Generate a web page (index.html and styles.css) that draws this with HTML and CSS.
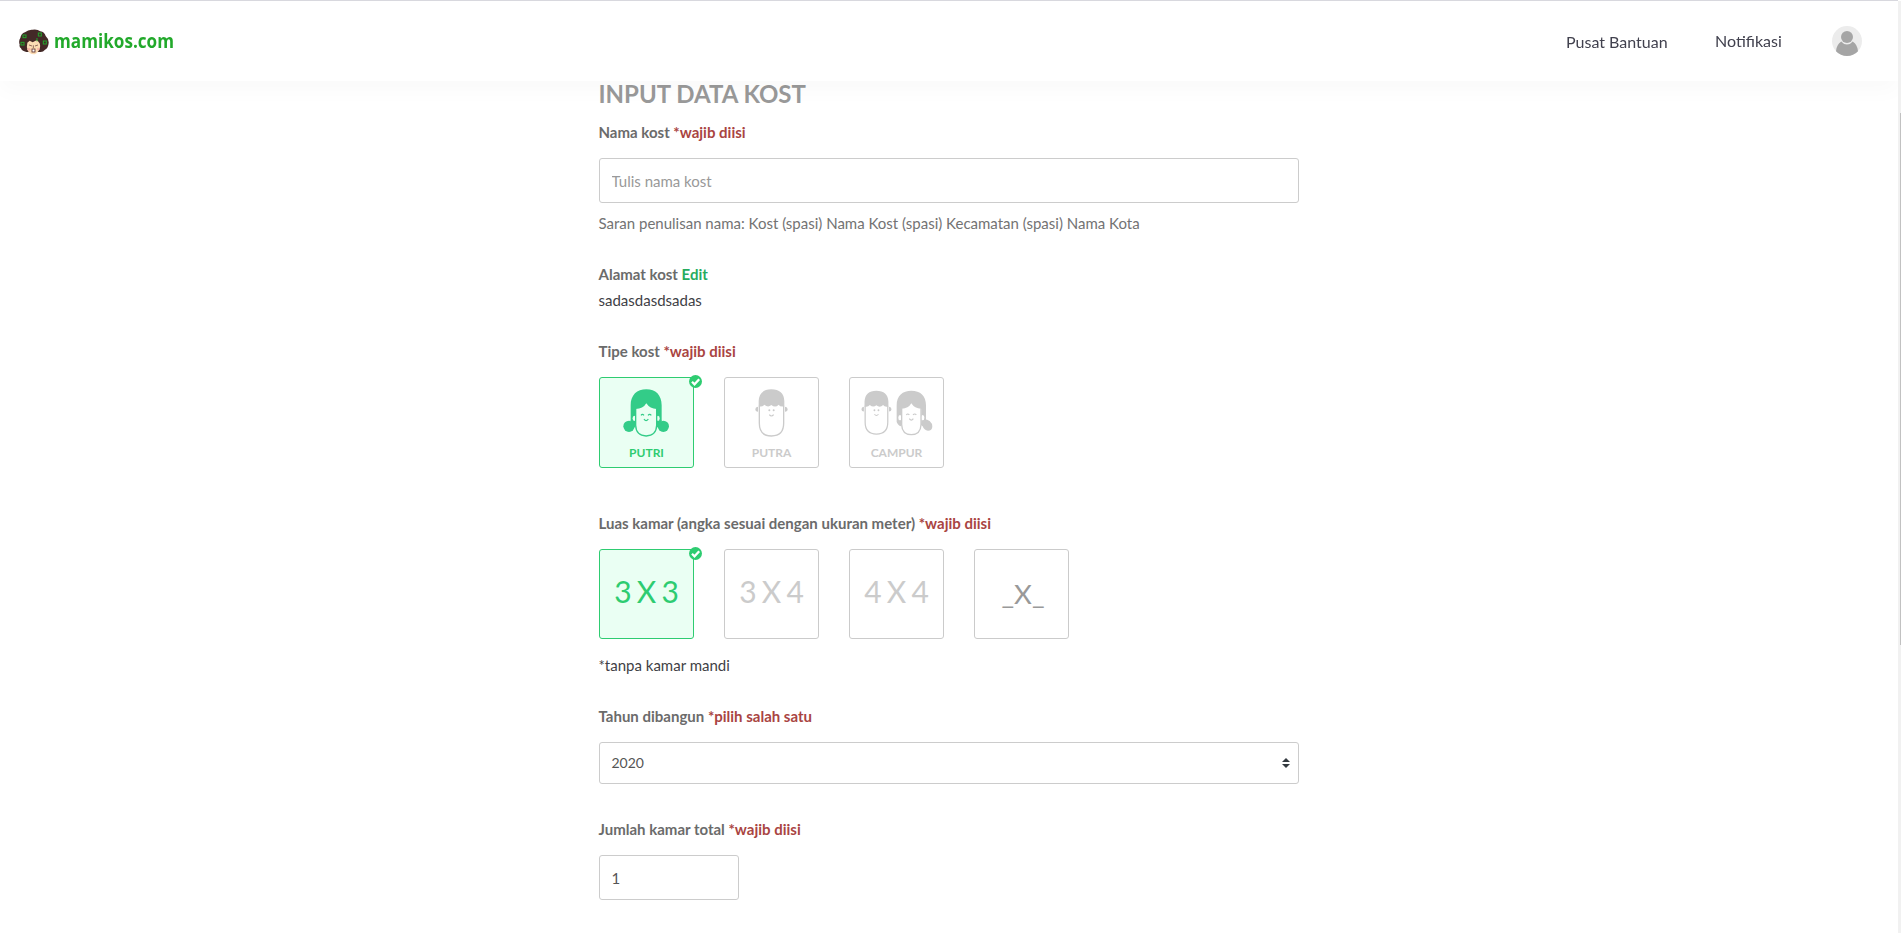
FILE: index.html
```html
<!DOCTYPE html>
<html lang="id">
<head>
<meta charset="utf-8">
<title>Mamikos - Input Data Kost</title>
<link rel="stylesheet" href="styles.css">
</head>
<body>
<header class="navbar">
  <a class="brand">
    <svg class="brand-face" viewBox="55 85 94 78" width="31.33" height="26">
      <path d="M60 132Q56 120 62 112Q64 99 76 95Q86 86 98 87Q112 84 122 92Q135 94 138 106Q148 115 147 127Q146 142 136 147Q130 155 121 154L80 154Q66 151 64 143Q58 139 60 132Z" fill="#432927"/>
      <path d="M83 126L90 120L99 125L112 118L120 128Q124 140 117 150Q110 161 101 161Q89 160 84 149Q80 138 83 126Z" fill="#fbdcb4"/>
      <ellipse cx="88" cy="146" rx="5" ry="4" fill="#f8b3a4"/><ellipse cx="116" cy="145" rx="4" ry="4" fill="#f8b3a4"/>
      <path d="M88 133l9 3M106 136l9-3M101 134v8" stroke="#6b4238" stroke-width="2.2" fill="none"/>
      <rect x="97" y="145" width="9" height="9" fill="#fff" stroke="#5a2d2a" stroke-width="2.5"/>
      <g fill="none" stroke="#22a52b" stroke-width="3"><rect x="70" y="103" width="9" height="8"/><rect x="116" y="97" width="9" height="9"/><rect x="64" y="125" width="9" height="8"/><rect x="131" y="121" width="9" height="9"/><path d="M112 112v10"/></g>
    </svg>
    <svg class="brand-name" width="130" height="34"><text x="0" y="23" textLength="120" lengthAdjust="spacingAndGlyphs">mamikos.com</text></svg>
  </a>
  <nav class="menu">
    <a class="menu-help">Pusat Bantuan</a>
    <a class="menu-notif">Notifikasi</a>
    <svg class="avatar" viewBox="0 0 30 30" width="30" height="30"><circle cx="15" cy="15" r="15" fill="#ececec"/><circle cx="15" cy="11" r="6" fill="#a5a5a5"/><path d="M9.3 15.5Q11.5 18.5 15 18.5Q18.500 18.500 20.700 15.500Q25.500 18.500 26 25.200Q21.500 30 15 30Q8.500 30 4 25.200Q4.500 18.500 9.300 15.500Z" fill="#a5a5a5"/></svg>
  </nav>
</header>
<main class="form">
  <h1 class="title">INPUT DATA KOST</h1>
  <section class="group group-name">
    <label class="label">Nama kost <span class="required">*wajib diisi</span></label>
    <input class="field" type="text" placeholder="Tulis nama kost">
    <p class="hint">Saran penulisan nama: Kost (spasi) Nama Kost (spasi) Kecamatan (spasi) Nama Kota</p>
  </section>
  <section class="group group-address">
    <label class="label">Alamat kost <a class="edit">Edit</a></label>
    <p class="text">sadasdasdsadas</p>
  </section>
  <section class="group group-type">
    <label class="label">Tipe kost <span class="required">*wajib diisi</span></label>
    <div class="cards">
      <div class="card card-type selected">
        <svg class="face" viewBox="100 70 140 145" width="46.67" height="48.33">
          <path d="M123 165V119C123 88 142 71 170 71C198 71 216 88 216 119V165H200V130H138V165Z" fill="#33cc88"/>
          <ellipse cx="118" cy="182" rx="17" ry="17" fill="#33cc88"/><ellipse cx="221" cy="182" rx="17" ry="17" fill="#33cc88"/>
          <path d="M123 163H137V185H125ZM202 163H216L214 185H202Z" fill="#33cc88"/>
          <ellipse cx="134" cy="158" rx="5" ry="8" fill="#eafff3"/><ellipse cx="205" cy="158" rx="5" ry="8" fill="#eafff3"/>
          <path d="M138 130Q160 130 170 113Q181 130 201 130V179Q200 210 169.500 211Q139 210 138 179Z" fill="#eafff3"/>
          <path d="M138 128V179Q139 210 169.500 211Q200 210 201 179V128" fill="none" stroke="#33cc88" stroke-width="4"/>
          <path d="M154 149q4-6 9 0M175 149q5-6 10 0M163 160q6 10 13 0" fill="none" stroke="#33cc88" stroke-width="3.5"/>
        </svg>
        <span class="caption">PUTRI</span>
        <svg class="check" viewBox="0 0 13 13" width="13" height="13"><circle cx="6.500" cy="6.500" r="6.500" fill="#2ecc71"/><path d="M3 6.800L5.500 9.300L10.200 4.300" fill="none" stroke="#fff" stroke-width="2.300"/></svg>
      </div>
      <div class="card card-type">
        <svg class="face" viewBox="474 70 140 145" width="46.67" height="48.33">
          <g id="boy-face">
            <path d="M508 120V173Q508 211 544.500 211Q581 211 581 173V120" fill="#fff" stroke="#cbcbcb" stroke-width="4"/>
            <path d="M506 122V106Q508 71 544 71Q581 71 583 106V122Q571 125 566 117Q556 128 544 118Q534 127 523 117Q517 125 506 122Z" fill="#cbcbcb"/>
            <path d="M504 123Q496 124 496 131Q496 138 504 138ZM585 123Q593 124 593 131Q593 138 585 138Z" fill="#cbcbcb"/>
            <circle cx="538" cy="134" r="3" fill="#cbcbcb"/><circle cx="551" cy="134" r="3" fill="#cbcbcb"/>
            <path d="M538 147q6 8 13 0" fill="none" stroke="#cbcbcb" stroke-width="3.500"/>
          </g>
        </svg>
        <span class="caption">PUTRA</span>
      </div>
      <div class="card card-type">
        <svg class="face" viewBox="809 70 220 145" width="73.33" height="48.33">
          <use href="#boy-face" transform="translate(352 9) scale(.93)"/>
          <path d="M919 175V119C919 90 937 75 963 75C990 75 1007 90 1007 119V163H993V130H933V182Q924 181 919 169Z" fill="#cbcbcb"/>
          <path d="M993 163Q1006 158 1018 166Q1027 174 1026 183Q1025 195 1013 195Q1001 194 997 182L992 178Z" fill="#cbcbcb"/>
          <ellipse cx="929" cy="156" rx="5" ry="8" fill="#fff"/><ellipse cx="997" cy="156" rx="5" ry="8" fill="#fff"/>
          <path d="M934 129Q954 129 963 113Q973 129 992 129V177Q991 206 963 207Q935 206 934 177Z" fill="#fff"/>
          <path d="M934 128V177Q935 206 963 207Q991 206 992 177V128" fill="none" stroke="#cbcbcb" stroke-width="4"/>
          <path d="M948 148q4-6 9 0M968 148q5-6 10 0M957 159q6 9 12 0" fill="none" stroke="#cbcbcb" stroke-width="3.500"/>
        </svg>
        <span class="caption">CAMPUR</span>
      </div>
    </div>
  </section>
  <section class="group group-size">
    <label class="label">Luas kamar (angka sesuai dengan ukuran meter) <span class="required">*wajib diisi</span></label>
    <div class="cards">
      <div class="card card-size selected">3 X 3
        <svg class="check" viewBox="0 0 13 13" width="13" height="13"><circle cx="6.500" cy="6.500" r="6.500" fill="#2ecc71"/><path d="M3 6.800L5.500 9.300L10.200 4.300" fill="none" stroke="#fff" stroke-width="2.300"/></svg>
      </div>
      <div class="card card-size">3 X 4</div>
      <div class="card card-size">4 X 4</div>
      <div class="card card-size custom">_X_</div>
    </div>
    <p class="text note">*tanpa kamar mandi</p>
  </section>
  <section class="group group-year">
    <label class="label">Tahun dibangun <span class="required">*pilih salah satu</span></label>
    <div class="field select"><span>2020</span><svg width="8" height="10" viewBox="0 0 8 10"><path d="M0 4L4 0L8 4ZM0 6H8L4 10Z" fill="#343a40"/></svg></div>
  </section>
  <section class="group group-total">
    <label class="label">Jumlah kamar total <span class="required">*wajib diisi</span></label>
    <input class="field field-small" type="text" value="1">
  </section>
</main>
<div class="scrollbar"><div class="thumb"></div></div>
</body>
</html>
```
FILE: styles.css
```css
* { box-sizing: border-box; }
html, body { height: 100%; }
body {
  margin: 0;
  overflow: hidden;
  background: #fff;
  color: #3f3f46;
  font: 15px/21px Lato, sans-serif;
}
h1, p { margin: 0; }

.navbar {
  position: fixed;
  z-index: 2;
  top: 0;
  left: 0;
  width: 1898px;
  height: 81px;
  padding: 0 36px 0 18px;
  display: flex;
  justify-content: space-between;
  align-items: center;
  background: #fff;
  border-top: 1px solid #d8d8de;
  box-shadow: 0 10px 20px rgba(0, 0, 0, .025);
}
.brand { display: flex; align-items: center; gap: 5px; padding-top: 1px; }
.brand-name { overflow: visible; }
.brand-name text { font: bold 20px "Open Sans", sans-serif; fill: #22a92b; }
.menu { display: flex; align-items: center; color: #41414e; font-size: 16px; }
.menu-help { width: 149px; padding-top: 1px; }
.menu-notif { width: 117px; padding-bottom: 1px; }

.form { width: 700px; margin-left: 598.5px; padding-top: 80px; }
.title { color: #999; font-size: 24px; font-weight: 700; line-height: 28px; }
.group { display: flex; flex-direction: column; align-items: flex-start; }
.label { height: 21px; color: #6b6b6b; font-weight: 700; }
.required { color: #a94442; }
.edit { color: #27ab5f; }
.field {
  width: 700px;
  height: 45px;
  margin-top: 15px;
  padding: 0 12px;
  border: 1px solid #ccc;
  border-radius: 3px;
  background: #fff;
  color: #555;
  font: 15px Lato, sans-serif;
}
.field::placeholder { color: #999; }
.hint { margin-top: 10px; color: #737373; }
.group-name { padding-top: 14px; }
.group-address { padding-top: 30px; }
.group-address .text { margin-top: 5px; }
.group-type { padding-top: 30px; }
.group-size { padding-top: 45px; }
.group-year { padding-top: 30px; }
.group-total { padding-top: 35px; }

.cards { display: flex; gap: 30px; margin: 15px 0 0 .5px; }
.card {
  position: relative;
  width: 95px;
  height: 90px;
  border: 1px solid #cbcbcb;
  border-radius: 3px;
  color: #cbcbcb;
}
.card-type { display: flex; flex-direction: column; align-items: center; height: 91px; padding-top: 11px; }
.caption { margin-top: 7px; font-size: 12px; font-weight: 700; line-height: 18px; }
.card-size { padding-top: 22px; text-align: center; font-size: 30px; line-height: 38px; word-spacing: -2.5px; }
.card.selected { border-color: #2ecc71; background: #eafff3; color: #2ecc71; }
.card.custom { color: #999; font-size: 27.5px; padding: 25px 0 0 3px; }
.check { position: absolute; top: -3px; right: -9px; }
.note { margin-top: 16px; }
.select { display: flex; justify-content: space-between; align-items: center; height: 42px; padding: 0 8px 1px 12px; font-size: 14px; }
.field-small { width: 140px; }

.scrollbar { position: fixed; z-index: 3; top: 1px; right: 0; bottom: 0; width: 3px; padding: 112px 0 0 2px; background: #f1f1f1; }
.thumb { height: 532px; background: #c1c1c1; }
```
